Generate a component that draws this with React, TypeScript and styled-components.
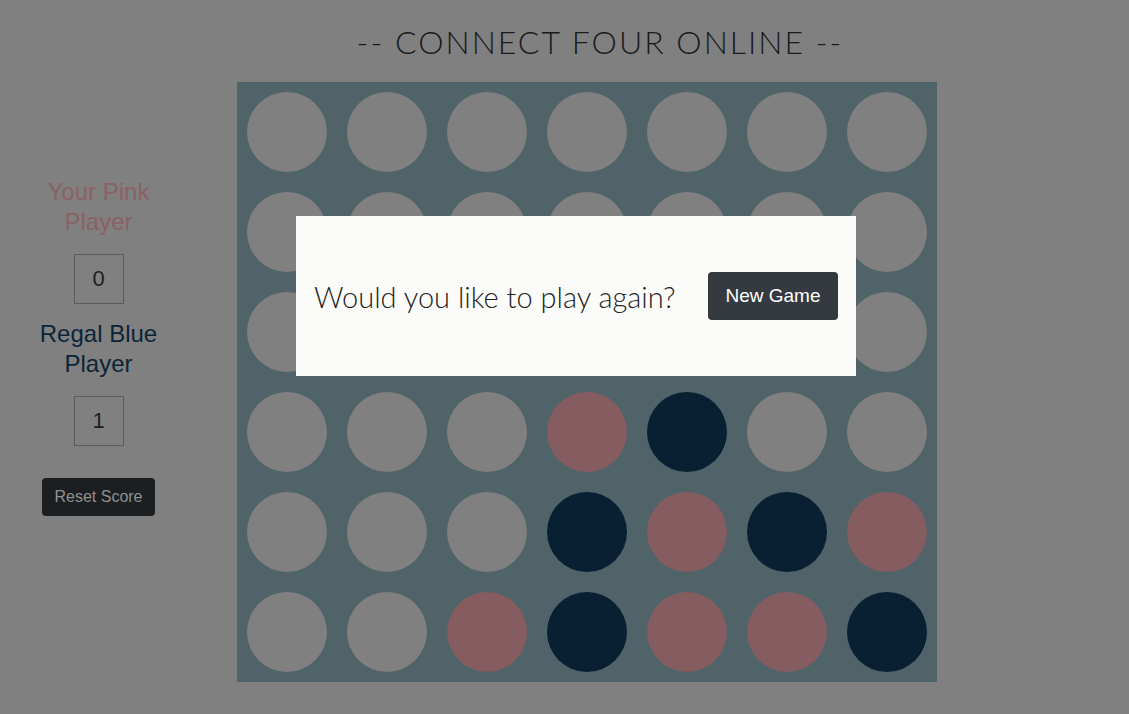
import React from "react";
import styled, { createGlobalStyle } from "styled-components";

const GlobalStyle = createGlobalStyle`
  html, body {
    margin: 0;
    padding: 0;
    background: #808080;
    font-family: "Liberation Sans", Arial, sans-serif;
  }
`;

type Cell = "e" | "p" | "b";

const board: Cell[][] = [
  ["e", "e", "e", "e", "e", "e", "e"],
  ["e", "e", "e", "e", "e", "e", "e"],
  ["e", "e", "e", "e", "e", "e", "e"],
  ["e", "e", "e", "p", "b", "e", "e"],
  ["e", "e", "e", "b", "p", "b", "p"],
  ["e", "e", "p", "b", "p", "p", "b"],
];

const cellColors: Record<Cell, string> = {
  e: "#808080",
  p: "#855c5f",
  b: "#082032",
};

const Page = styled.div`
  display: flex;
  width: 1129px;
  height: 714px;
  overflow: hidden;
`;

const Sidebar = styled.aside`
  width: 197px;
  display: flex;
  flex-direction: column;
  align-items: center;
  padding-top: 177px;
  box-sizing: border-box;
`;

const PlayerName = styled.div<{ $color: string }>`
  width: 140px;
  text-align: center;
  font-size: 24px;
  line-height: 30px;
  color: ${({ $color }) => $color};
`;

const ScoreBox = styled.div`
  width: 50px;
  height: 50px;
  box-sizing: border-box;
  border: 1px solid #5c5c5c;
  display: flex;
  align-items: center;
  justify-content: center;
  font-size: 22px;
  color: #1e1e1e;
  margin: 17px 0 15px;
`;

const ResetButton = styled.button`
  margin-top: 17px;
  width: 113px;
  height: 38px;
  border: none;
  border-radius: 4px;
  background: #1c1f22;
  color: #909090;
  font-family: "Liberation Sans", Arial, sans-serif;
  font-size: 16px;
`;

const Main = styled.main`
  margin-left: 40px;
  width: 726px;
  display: flex;
  flex-direction: column;
`;

const Title = styled.h1`
  margin: 22px 0 0;
  height: 60px;
  text-align: center;
  font-family: "Lato", "Liberation Sans", sans-serif;
  font-weight: 300;
  font-size: 32px;
  letter-spacing: 2px;
  color: #1a1a1a;
`;

const Board = styled.div`
  width: 700px;
  height: 600px;
  background: #4f6369;
  display: grid;
  grid-template-columns: repeat(7, 100px);
  grid-template-rows: repeat(6, 100px);
`;

const Slot = styled.div`
  display: flex;
  align-items: center;
  justify-content: center;
`;

const Disc = styled.div<{ $color: string }>`
  width: 80px;
  height: 80px;
  border-radius: 50%;
  background: ${({ $color }) => $color};
`;

const Overlay = styled.div`
  position: fixed;
  inset: 0;
  padding: 216px 0 0 296px;
`;

const Dialog = styled.div`
  width: 560px;
  height: 160px;
  box-sizing: border-box;
  background: #fbfbf9;
  display: flex;
  align-items: center;
  justify-content: space-between;
  padding: 0 18px;
`;

const Question = styled.p`
  margin: 0;
  font-family: "Lato", "Liberation Sans", sans-serif;
  font-weight: 300;
  font-size: 29px;
  color: #1e1e1e;
`;

const NewGameButton = styled.button`
  width: 130px;
  height: 48px;
  border: none;
  border-radius: 4px;
  background: #343a40;
  color: #ffffff;
  font-family: "Liberation Sans", Arial, sans-serif;
  font-size: 19px;
  font-weight: 500;
`;

export default function App() {
  return (
    <>
      <GlobalStyle />
      <Page>
        <Sidebar>
          <PlayerName $color="#8a6165">Your Pink Player</PlayerName>
          <ScoreBox>0</ScoreBox>
          <PlayerName $color="#0b2538">Regal Blue Player</PlayerName>
          <ScoreBox>1</ScoreBox>
          <ResetButton>Reset Score</ResetButton>
        </Sidebar>
        <Main>
          <Title>-- CONNECT FOUR ONLINE --</Title>
          <Board>
            {board.flatMap((row, r) =>
              row.map((cell, c) => (
                <Slot key={`${r}-${c}`}>
                  <Disc $color={cellColors[cell]} />
                </Slot>
              ))
            )}
          </Board>
        </Main>
      </Page>
      <Overlay>
        <Dialog>
          <Question>Would you like to play again?</Question>
          <NewGameButton>New Game</NewGameButton>
        </Dialog>
      </Overlay>
    </>
  );
}
